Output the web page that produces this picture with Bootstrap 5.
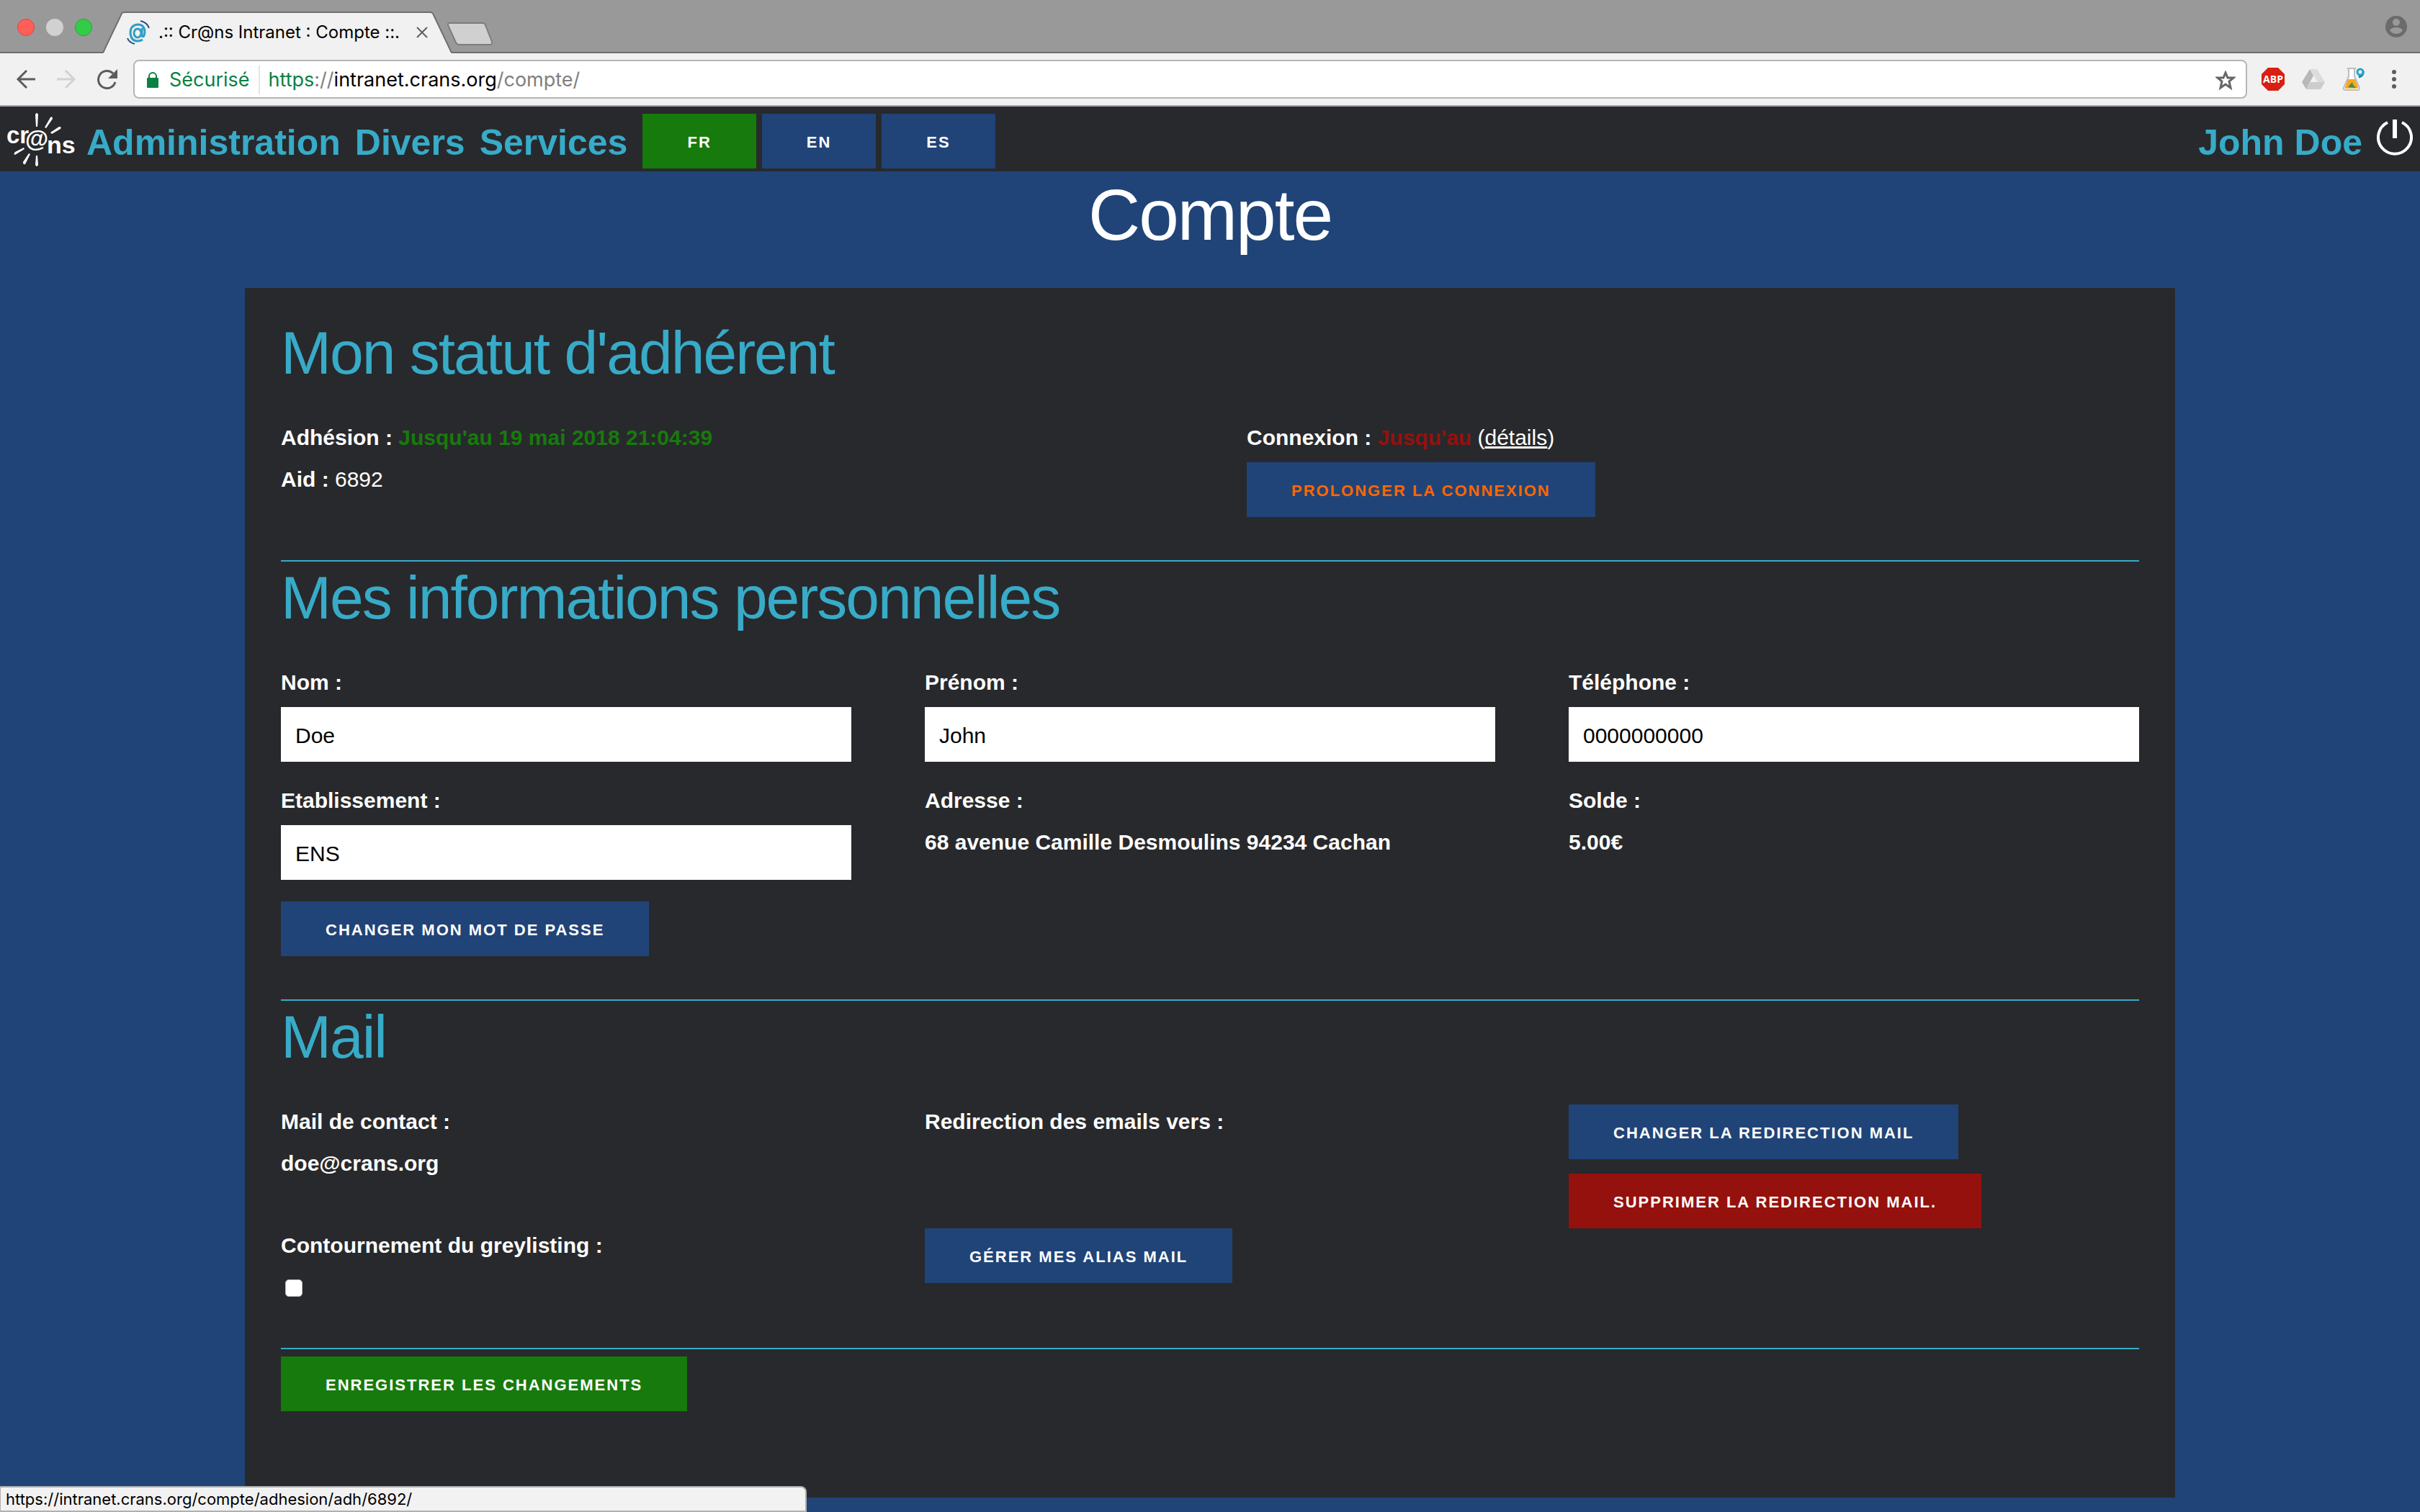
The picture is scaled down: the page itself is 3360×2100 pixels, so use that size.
<!DOCTYPE html>
<html lang="fr">
<head>
<meta charset="utf-8">
<meta name="viewport" content="width=device-width, initial-scale=1">
<title>.:: Cr@ns Intranet : Compte ::.</title>
<link href="https://cdn.jsdelivr.net/npm/bootstrap@5.3.0/dist/css/bootstrap.min.css" rel="stylesheet">
<style>
:root { --ink:#28292c; --blue:#204478; --cyan:#37abc8; --green:#177a0c; --red:#95110d; }
body { background:var(--blue); color:#fff; font-family:"Liberation Sans",Arial,sans-serif; font-size:30px; line-height:48px; min-height:100vh; }
/* browser frame */
.chrome-ui { font-family:Inter,Roboto,sans-serif; color:#000; }
.tabstrip { height:74px; background:#999; border-bottom:2px solid #6e6e6e; }
.tabstrip svg, .toolbar svg { flex:none; display:block; }
.lights { gap:16px; padding:4px 14px 0 24px; }
.light { width:24px; height:24px; border-radius:50%; background:#d1d1d1; }
.light-close { background:#ff5f57; border:1px solid #e0443e; }
.light-zoom { background:#33cc47; border:1px solid #1fa834; }
.tab-shape { position:relative; width:486px; height:58px; margin-bottom:-2px; padding:0 34px; }
.tab-shape > svg { position:absolute; left:0; top:0; }
.tab-body { position:relative; height:58px; font-size:24px; line-height:30px; }
.tab-new { margin:0 0 8px -8px; }
.toolbar { height:74px; background:#f1f1f1; border-bottom:2px solid #a9a8aa; padding:0 30px 0 22px; }
.address { height:54px; margin:0 20px; background:#fff; border:2px solid #b6b6b6; border-radius:8px; font-size:27px; line-height:34px; padding:2px 14px 0 16px; color:#808080; }
.secure { color:#0b8043; border-right:2px solid #e5e5e5; line-height:40px; margin-right:12px; padding-right:12px; gap:14px; }
.secure-scheme { color:#0b8043; }
.status-tip { position:fixed; left:0; bottom:0; width:1120px; max-width:100%; height:36px; background:#f2f2f2; border:2px solid #b0b0b0; border-left-width:1px; border-radius:0 8px 0 0; font-size:22px; line-height:32px; padding-left:7px; }
/* site header */
.site-nav { background:var(--ink); height:90px; padding:0 10px; }
.site-nav .nav-link { color:var(--cyan); font-size:50px; line-height:70px; font-weight:700; padding:10px 10px 0; }
.site-nav svg { display:block; }
.langs { gap:8px; margin:6px 0 0 11px; }
.btn-crans { --bs-btn-color:#fff; --bs-btn-hover-color:#fff; --bs-btn-bg:var(--blue); --bs-btn-hover-bg:#2a5593; --bs-btn-border-width:0; --bs-btn-border-radius:0; --bs-btn-font-size:22px; --bs-btn-font-weight:700; --bs-btn-line-height:72px; --bs-btn-padding-y:0; --bs-btn-padding-x:62px; padding-top:4px; text-transform:uppercase; letter-spacing:2px; white-space:nowrap; }
.btn-save { --bs-btn-bg:var(--green); --bs-btn-hover-bg:#1f9112; }
.btn-remove { --bs-btn-bg:var(--red); --bs-btn-hover-bg:#b01813; }
.btn-extend { --bs-btn-color:#ff6600; --bs-btn-hover-color:#ff6600; }
/* page */
h1 { font-size:100px; line-height:120px; letter-spacing:-2px; font-weight:400; margin:0 0 42px; }
.sheet { background:var(--ink); width:80%; max-width:2680px; margin:0 auto 20px; padding:40px 50px 120px; }
h2 { color:var(--cyan); font-size:84px; line-height:101px; letter-spacing:-2px; font-weight:400; margin:0 0 43px; }
.block { border-bottom:2px solid var(--cyan); padding-bottom:60px; margin-bottom:0; }
.block .row { --bs-gutter-x:102px; }
.line, .block label { display:block; margin:0 0 10px; }
.line:last-child { margin-bottom:0; }
.block label, .line-strong { font-weight:700; }
.block .form-control { height:76px; border:0; border-radius:0; padding:4px 20px 0; font-size:30px; line-height:48px; color:#000; background:#fff; }
.field { margin-bottom:30px; }
.stack { gap:20px; }
.tick-line { height:48px; padding:1px 6px 0; }
.block .form-check-input { width:24px; height:24px; margin:0; border:1px solid #bbb; border-radius:5px; background-color:#fff; float:none; }
.submit-line { padding-top:10px; }
.ok { color:var(--green); }
.ko { color:var(--red); }
</style>
</head>
<body>
<div class="chrome-ui">
  <div class="tabstrip d-flex align-items-end">
    <div class="lights d-flex align-self-center">
      <span class="light light-close"></span><span class="light"></span><span class="light light-zoom"></span>
    </div>
    <div class="tab-shape">
      <svg width="486" height="58" viewBox="0 0 486 58"><path d="M0 58Q2 57 3 53L26 5Q27 1 31 1H455Q459 1 460 5L483 53Q484 57 486 58Z" fill="#f1f1f1"/><path d="M0 57Q2 57 3 53L26 5Q27 1 31 1H455Q459 1 460 5L483 53Q484 57 486 57" fill="none" stroke="#6e6e6e" stroke-width="2"/></svg>
      <div class="tab-body d-flex align-items-center">
        <svg width="32" height="34" viewBox="0 0 32 34" fill="none"><ellipse cx="15" cy="18" rx="5" ry="6" stroke="#2f9fc4" stroke-width="3"/><path d="M21 11V22Q24 25 25 17 25 6 15 6 5 7 5 18 6 29 15 29 19 29 22 27" stroke="#2f9fc4" stroke-width="3"/><path d="M19 1Q28 3 31 11M1 25Q3 31 11 33" stroke="#2c4a82" stroke-width="2"/></svg>
        <span class="ms-2 ps-1 flex-grow-1 text-nowrap">.:: Cr@ns Intranet : Compte ::.</span>
        <svg width="16" height="16" viewBox="0 0 16 16"><path d="M1 1L15 15M15 1L1 15" stroke="#5f5f5f" stroke-width="2"/></svg>
      </div>
    </div>
    <svg class="tab-new" width="66" height="34" viewBox="0 0 66 34"><path d="M5 2H50Q53 2 54 5L63 28Q64 32 60 32H18Q14 32 13 29L2 5Q1 2 5 2Z" fill="#d0d0d0" stroke="#7d7d7d" stroke-width="2"/></svg>
    <svg class="align-self-center ms-auto me-3" width="34" height="34" viewBox="0 0 34 34"><circle cx="17" cy="18" r="15" fill="#6b6b6b"/><circle cx="17" cy="12" r="5" fill="#999"/><path d="M8 23Q11 19 17 19T26 23Q23 28 17 28T8 23Z" fill="#999"/></svg>
  </div>
  <div class="toolbar d-flex align-items-center">
    <svg width="28" height="28" viewBox="0 0 28 28" fill="none" stroke="#5c5c5c" stroke-width="3"><path d="M27 14H3M15 2L3 14 15 26"/></svg>
    <svg class="ms-4" width="32" height="28" viewBox="0 0 32 28" fill="none" stroke="#d2d2d2" stroke-width="3"><path d="M5 14H29M17 2L29 14 17 26"/></svg>
    <svg class="ms-4" width="35" height="28" viewBox="0 0 35 28"><path d="M30 18A12 12 0 1 1 27 6" fill="none" stroke="#5c5c5c" stroke-width="3"/><path d="M33 0V13H20Z" fill="#5c5c5c"/></svg>
    <div class="address d-flex align-items-center flex-grow-1">
      <span class="secure d-flex align-items-center"><svg width="18" height="24" viewBox="0 0 18 24"><path d="M4 11V7a5 5 0 0 1 10 0v4" fill="none" stroke="#0b8043" stroke-width="2"/><rect x="1" y="9" width="16" height="14" rx="1" fill="#0b8043"/></svg><span>Sécurisé</span></span>
      <span class="flex-grow-1"><span class="secure-scheme">https</span>://<span class="text-black">intranet.crans.org</span>/compte/</span>
      <svg width="28" height="28" viewBox="0 0 28 28"><path d="M14 4L17 11H25L19 16 21 25 14 20 7 25 9 16 3 11H11Z" fill="none" stroke="#666" stroke-width="3"/></svg>
    </div>
    <div class="d-flex align-items-center gap-4">
      <svg width="32" height="32" viewBox="0 0 32 32"><path d="M9 0H23L32 9V23L23 32H9L0 23V9Z" fill="#d91f11"/><text x="16" y="21" text-anchor="middle" font-family="Open Sans,sans-serif" font-size="14" font-weight="700" fill="#fff">ABP</text></svg>
      <svg width="32" height="28" viewBox="0 0 32 28"><path d="M11 0H21L32 18H22Z" fill="#dcdcdc"/><path d="M11 0L16 9 6 28 0 18Z" fill="#b8b8b8"/><path d="M12 18H32L26 28H6Z" fill="#ccc"/></svg>
      <svg width="34" height="34" viewBox="0 0 34 34"><path d="M8 2H18L17 4V13L24 29Q24 32 21 32H5Q1 32 2 29L9 13V4Z" fill="#fff" stroke="#bdbdbd" stroke-width="2"/><path d="M8 17H18L22 28Q22 30 20 30H6Q3 30 4 28Z" fill="#f7a823"/><path d="M8 28l6-7 1 4 4 4Z" fill="#4b8b35"/><path d="M23 14Q30 12 29 6" stroke="#1877a8" stroke-width="3" fill="none"/><circle cx="25" cy="7" r="4" fill="none" stroke="#26a5cc" stroke-width="3"/></svg>
      <svg width="20" height="28" viewBox="0 0 20 28" fill="#5c5c5c"><circle cx="14" cy="4" r="3"/><circle cx="14" cy="14" r="3"/><circle cx="14" cy="24" r="3"/></svg>
    </div>
  </div>
</div>

<nav class="site-nav d-flex align-items-center">
  <a href="#" aria-label="Cr@ns"><svg width="100" height="80" viewBox="0 0 100 80"><g fill="#fff"><path d="M39 6Q41 2 43 6L42 23H40ZM60 10Q63 8 63 12L54 25 52 24ZM72 23Q76 23 74 26L62 33 60 31ZM11 62Q8 61 11 58L23 52 24 54ZM25 75Q22 76 22 72L30 60 32 61ZM43 76Q41 80 39 76L40 63H42Z"/></g><g font-family="Liberation Sans,sans-serif" font-weight="700" fill="#fff"><text x="-1" y="46" font-size="33">cr</text><text x="25" y="51" font-size="33">@</text><text x="55" y="60" font-size="34">ns</text></g></svg></a>
  <a class="nav-link" href="#">Administration</a>
  <a class="nav-link" href="#">Divers</a>
  <a class="nav-link" href="#">Services</a>
  <div class="langs d-flex">
    <button type="button" class="btn btn-crans btn-save">fr</button>
    <button type="button" class="btn btn-crans">en</button>
    <button type="button" class="btn btn-crans">es</button>
  </div>
  <a class="nav-link ms-auto" href="#">John Doe</a>
  <a class="ms-2" href="#" aria-label="Déconnexion"><svg width="52" height="60" viewBox="0 0 52 60" fill="none" stroke="#fff"><path d="M17 7A23 23 0 1 0 37 7" stroke-width="4"/><path d="M27 3V29" stroke-width="6"/></svg></a>
</nav>

<main>
  <h1 class="text-center">Compte</h1>
  <form class="sheet">
    <section class="block">
      <h2>Mon statut d'adhérent</h2>
      <div class="row">
        <div class="col-6">
          <p class="line"><strong>Adhésion : <span class="ok">Jusqu'au 19 mai 2018 21:04:39</span></strong></p>
          <p class="line"><strong>Aid :</strong> 6892</p>
        </div>
        <div class="col-6">
          <p class="line"><strong>Connexion : <span class="ko">Jusqu'au</span></strong> (<a class="text-white" href="#">détails</a>)</p>
          <button type="button" class="btn btn-crans btn-extend d-block">Prolonger la connexion</button>
        </div>
      </div>
    </section>
    <section class="block">
      <h2>Mes informations personnelles</h2>
      <div class="row">
        <div class="col-4 field"><label for="nom">Nom :</label><input class="form-control" id="nom" type="text" value="Doe"></div>
        <div class="col-4 field"><label for="prenom">Prénom :</label><input class="form-control" id="prenom" type="text" value="John"></div>
        <div class="col-4 field"><label for="tel">Téléphone :</label><input class="form-control" id="tel" type="tel" value="0000000000"></div>
        <div class="col-4 field"><label for="etab">Etablissement :</label><input class="form-control" id="etab" type="text" value="ENS"></div>
        <div class="col-4 field"><p class="line line-strong">Adresse :</p><p class="line line-strong">68 avenue Camille Desmoulins 94234 Cachan</p></div>
        <div class="col-4 field"><p class="line line-strong">Solde :</p><p class="line line-strong">5.00€</p></div>
      </div>
      <button type="button" class="btn btn-crans d-block">Changer mon mot de passe</button>
    </section>
    <section class="block">
      <h2>Mail</h2>
      <div class="row">
        <div class="col-4"><p class="line line-strong">Mail de contact :</p><p class="line line-strong">doe@crans.org</p></div>
        <div class="col-4"><p class="line line-strong">Redirection des emails vers :</p></div>
        <div class="col-4 stack d-flex flex-column align-items-start">
          <button type="button" class="btn btn-crans">Changer la redirection mail</button>
          <button type="button" class="btn btn-crans btn-remove">Supprimer la redirection mail.</button>
        </div>
      </div>
      <div class="row">
        <div class="col-4"><label for="grey">Contournement du greylisting :</label><div class="tick-line d-flex align-items-center"><input class="form-check-input" id="grey" type="checkbox"></div></div>
        <div class="col-4"><button type="button" class="btn btn-crans">Gérer mes alias mail</button></div>
      </div>
    </section>
    <div class="submit-line"><button type="submit" class="btn btn-crans btn-save d-block">Enregistrer les changements</button></div>
  </form>
</main>
<div class="chrome-ui status-tip">https://intranet.crans.org/compte/adhesion/adh/6892/</div>
<script src="https://cdn.jsdelivr.net/npm/bootstrap@5.3.0/dist/js/bootstrap.bundle.min.js"></script>
</body>
</html>
